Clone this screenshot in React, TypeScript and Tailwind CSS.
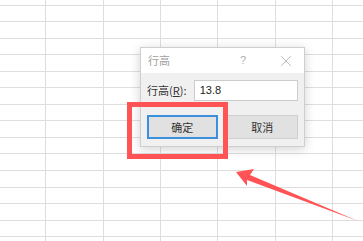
import { X } from "lucide-react";

const COLS = [46, 57.5, 57.5, 57, 57.5, 57.5, 40];
const ROWS = [5.5, ...Array(15).fill(16.55)];

function Sheet() {
  return (
    <div className="flex flex-col">
      {ROWS.map((h, r) => (
        <div key={r} className="flex shrink-0" style={{ height: h }}>
          {COLS.map((w, c) => (
            <div
              key={c}
              className="shrink-0 border-r border-b border-[#dedede]"
              style={{ width: w }}
            />
          ))}
        </div>
      ))}
    </div>
  );
}

export default function App() {
  return (
    <div className="relative w-[363px] h-[241px] overflow-hidden bg-white font-['Noto_Sans_CJK_SC','Noto_Sans',sans-serif]">
      <Sheet />

      {/* row height dialog */}
      <div className="absolute left-[140px] top-[47px] w-[165px] h-[100px] flex flex-col border border-[#cfcfcf] bg-[#f0f0f0] shadow-[0_2px_10px_rgba(0,0,0,0.18)]">
        <div className="h-[25px] flex items-center bg-white pl-[7px] pr-[9px] text-[11px] text-[#a0a0a0]">
          <span>行高</span>
          <span className="ml-auto mr-[31px] text-[#b0b0b0] font-['Liberation_Sans',sans-serif]">?</span>
          <X size={18} strokeWidth={0.9} className="text-[#9a9a9a]" />
        </div>
        <div className="flex flex-col px-[6px] pt-[7px]">
          <div className="flex items-center">
            <span className="w-[47px] text-[11px] text-[#333]">
              行高(<span className="underline">R</span>):
            </span>
            <div className="w-[105px] h-[21px] flex items-center bg-white border border-[#cccccc] pl-[5px] text-[11px] text-[#222] font-['Liberation_Sans',sans-serif]">
              13.8
            </div>
          </div>
          <div className="flex mt-[14px] gap-[9px]">
            <button className="w-[71px] h-[24px] flex items-center justify-center bg-[#e1e1e1] border-2 border-[#3c8fdc] text-[11px] text-[#333]">
              确定
            </button>
            <button className="w-[72px] h-[24px] flex items-center justify-center bg-[#e1e1e1] border border-[#cfcfcf] text-[11px] text-[#333]">
              取消
            </button>
          </div>
        </div>
      </div>

      {/* highlight box */}
      <div className="absolute left-[127px] top-[102px] w-[101px] h-[57px] border-[5px] border-[#ff5356]" />

      {/* arrow */}
      <svg className="absolute inset-0" width="363" height="241" viewBox="0 0 363 241">
        <polygon
          points="236,172 254,169 250,175 358,221 247,180 247,186"
          fill="#ff5356"
        />
      </svg>
    </div>
  );
}
